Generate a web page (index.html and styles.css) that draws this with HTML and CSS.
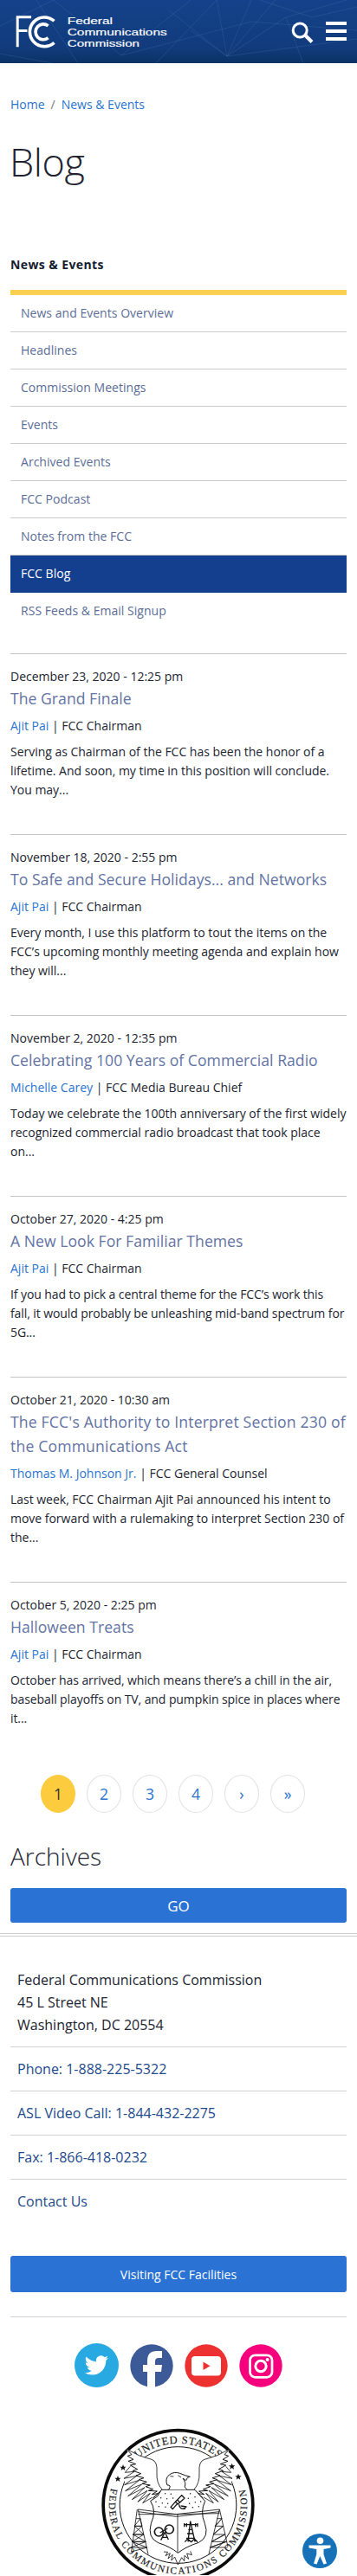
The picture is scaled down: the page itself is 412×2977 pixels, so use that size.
FILE: index.html
```html
<!DOCTYPE html>
<html lang="en">
<head>
<meta charset="utf-8">
<meta name="viewport" content="width=device-width, initial-scale=1">
<title>Blog | Federal Communications Commission</title>
<link rel="stylesheet" href="styles.css">
</head>
<body>
<header class="site-header">
  <svg class="header-pattern" viewBox="0 0 412 73" fill="none" stroke="#3f6ea6" stroke-opacity=".35" stroke-width="1"><path d="M0 30 62 0 M42 0 90 73 M62 0 140 64 220 0 M140 64 290 25 412 35 M180 73 250 0 262 65 M262 65 195 12 M262 65 220 35 M262 65 290 0 M262 65 318 0 M262 65 412 45 M262 65 330 20 400 0 M330 20 350 73 M0 62 60 73 M300 0 360 20 412 8"/></svg>
  <a class="logo" href="#" aria-label="Federal Communications Commission">
    <svg viewBox="50 48 532 124" width="177" height="41">
      <g fill="none" stroke="#fff">
        <path stroke-width="9" d="M58 164V59H106M62 107H92"/>
        <path stroke-width="11" d="M186 73A51 51 0 1 0 186 149"/>
        <path stroke-width="11" d="M165 90A27 27 0 1 0 165 132"/>
      </g>
      <g class="logo-text">
        <text x="232" y="83" textLength="158" lengthAdjust="spacingAndGlyphs">Federal</text>
        <text x="232" y="123" textLength="348" lengthAdjust="spacingAndGlyphs">Communications</text>
        <text x="232" y="164" textLength="252" lengthAdjust="spacingAndGlyphs">Commission</text>
      </g>
    </svg>
  </a>
  <div class="header-tools">
    <svg width="26" height="26" viewBox="0 0 26 26" fill="none" stroke="#fff"><circle cx="10.2" cy="10" r="8" stroke-width="3"/><path d="M16 15.5 24 23.5" stroke-width="4"/></svg>
    <span class="menu-icon"><i></i><i></i><i></i></span>
  </div>
</header>
<main class="content">
  <nav class="breadcrumb"><a href="#">Home</a><span>/</span><a href="#">News &amp; Events</a></nav>
  <h1>Blog</h1>
  <nav class="side-menu">
    <h2>News &amp; Events</h2>
    <ul>
      <li>News and Events Overview</li>
      <li>Headlines</li>
      <li>Commission Meetings</li>
      <li>Events</li>
      <li>Archived Events</li>
      <li>FCC Podcast</li>
      <li>Notes from the FCC</li>
      <li class="active">FCC Blog</li>
      <li>RSS Feeds &amp; Email Signup</li>
    </ul>
  </nav>
  <article class="post">
    <div class="date">December 23, 2020 - 12:25 pm</div>
    <h3>The Grand Finale</h3>
    <div class="author"><a href="#">Ajit Pai</a> | FCC Chairman</div>
    <p>Serving as Chairman of the FCC has been the honor of a<br>lifetime. And soon, my time in this position will conclude.<br>You may...</p>
  </article>
  <article class="post">
    <div class="date">November 18, 2020 - 2:55 pm</div>
    <h3>To Safe and Secure Holidays... and Networks</h3>
    <div class="author"><a href="#">Ajit Pai</a> | FCC Chairman</div>
    <p>Every month, I use this platform to tout the items on the<br>FCC’s upcoming monthly meeting agenda and explain how<br>they will...</p>
  </article>
  <article class="post">
    <div class="date">November 2, 2020 - 12:35 pm</div>
    <h3>Celebrating 100 Years of Commercial Radio</h3>
    <div class="author"><a href="#">Michelle Carey</a> | FCC Media Bureau Chief</div>
    <p>Today we celebrate the 100th anniversary of the first widely<br>recognized commercial radio broadcast that took place<br>on...</p>
  </article>
  <article class="post">
    <div class="date">October 27, 2020 - 4:25 pm</div>
    <h3>A New Look For Familiar Themes</h3>
    <div class="author"><a href="#">Ajit Pai</a> | FCC Chairman</div>
    <p class="tight">If you had to pick a central theme for the FCC’s work this<br>fall, it would probably be unleashing mid-band spectrum for<br>5G...</p>
  </article>
  <article class="post">
    <div class="date">October 21, 2020 - 10:30 am</div>
    <h3 class="loose">The FCC's Authority to Interpret Section 230 of<br>the Communications Act</h3>
    <div class="author"><a href="#">Thomas M. Johnson Jr.</a> | FCC General Counsel</div>
    <p>Last week, FCC Chairman Ajit Pai announced his intent to<br>move forward with a rulemaking to interpret Section 230 of<br>the...</p>
  </article>
  <article class="post">
    <div class="date">October 5, 2020 - 2:25 pm</div>
    <h3>Halloween Treats</h3>
    <div class="author"><a href="#">Ajit Pai</a> | FCC Chairman</div>
    <p class="tight">October has arrived, which means there’s a chill in the air,<br>baseball playoffs on TV, and pumpkin spice in places where<br>it...</p>
  </article>
  <nav class="pager"><span class="current">1</span><a>2</a><a>3</a><a>4</a><a>›</a><a>»</a></nav>
  <h2 class="archives">Archives</h2>
  <button class="btn go">GO</button>
</main>
<footer class="site-footer">
  <ul class="contact">
    <li class="address">Federal Communications Commission<br>45 L Street NE<br>Washington, DC 20554</li>
    <li><a href="#">Phone: 1-888-225-5322</a></li>
    <li><a href="#">ASL Video Call: 1-844-432-2275</a></li>
    <li><a href="#">Fax: 1-866-418-0232</a></li>
    <li><a href="#">Contact Us</a></li>
  </ul>
  <button class="btn visit">Visiting FCC Facilities</button>
  <div class="social">
    <svg viewBox="0 0 51 51" width="51" height="51"><circle cx="25.5" cy="25.5" r="25.5" fill="#29a9e1"/><path fill="#fff" transform="translate(11.7 11.8) scale(1.14)" d="M23.95 4.57a10 10 0 0 1-2.82.77 4.96 4.96 0 0 0 2.16-2.72c-.95.55-2 .96-3.13 1.18a4.92 4.92 0 0 0-8.38 4.48C7.69 8.1 4.07 6.13 1.64 3.16a4.92 4.92 0 0 0 1.52 6.57 4.9 4.9 0 0 1-2.23-.61v.06c0 2.39 1.7 4.37 3.95 4.83a5 5 0 0 1-2.22.08 4.93 4.93 0 0 0 4.6 3.42A9.87 9.87 0 0 1 0 19.54a13.94 13.94 0 0 0 7.55 2.21c9.05 0 14-7.5 14-13.98 0-.21 0-.42-.02-.63a9.94 9.94 0 0 0 2.42-2.57z"/></svg>
    <svg viewBox="0 0 50 50" width="50" height="50"><circle cx="25" cy="25" r="24.7" fill="#3d5a98"/><path fill="#fff" d="M20 50V32H15V24H20V19Q20 8 31 8H37V16H33Q29 16 29 20V24H37L36 32H29V50Z"/></svg>
    <svg viewBox="0 0 50 50" width="50" height="50"><circle cx="25" cy="25" r="24.7" fill="#ed3131"/><rect x="8" y="14" width="34" height="22.5" rx="4" fill="#fff"/><path fill="#ed3131" d="M21.5 20.5 29.5 25.2 21.5 30Z"/></svg>
    <svg viewBox="0 0 50 50" width="50" height="50"><circle cx="25" cy="25" r="24.7" fill="#f7007d"/><g fill="none" stroke="#fff" stroke-width="2.7"><rect x="12.5" y="12.8" width="25.5" height="25.5" rx="6"/><circle cx="25" cy="25.5" r="6.2" stroke-width="3"/></g><circle cx="32.6" cy="18" r="2" fill="#fff"/></svg>
  </div>
  <div class="seal">
    <svg viewBox="81 51 531 510" width="177" height="170">
      <defs>
        <path id="arc-top" d="M132.500 318A214 214 0 0 1 560.500 318"/>
        <path id="arc-bottom" d="M118 248A239 239 0 1 0 575 248"/>
        <path id="star" d="M0-11 3-3 11-3 5 2 7 10 0 5-7 10-5 2-11-3-3-3Z"/>
      </defs>
      <circle cx="346.500" cy="318" r="259" fill="#fff" stroke="#0b0b0b" stroke-width="11"/>
      <circle cx="346.500" cy="318" r="202" fill="none" stroke="#111" stroke-width="3"/>
      <g class="seal-text">
        <text class="seal-top" textLength="306"><textPath href="#arc-top" startOffset="183">UNITED STATES</textPath></text>
        <text textLength="865"><textPath href="#arc-bottom" startOffset="12">FEDERAL COMMUNICATIONS COMMISSION</textPath></text>
      </g>
      <g fill="#111"><use href="#star" x="156" y="188"/><use href="#star" x="138" y="227"/><use href="#star" x="533" y="184"/><use href="#star" x="555" y="220"/></g>
      <g fill="none" stroke="#151515" stroke-width="2.500" stroke-linejoin="round">
        <g id="wing">
          <path fill="#fff" stroke="none" d="M168 124Q235 160 264 164 282 210 291 264L260 302 165 290 160 210 190 180Z"/>
          <path d="M168 124Q210 150 255 160 276 166 273 205 271 242 291 264"/>
          <path stroke-width="3" d="M168 124 186 143 172 148 192 160 174 166 200 176 181 180 206 194 190 199 218 209 201 216 228 224 211 230 238 238 222 244 250 249 234 254 260 263 244 268 274 270 256 281 278 278 260 294 291 264"/>
          <path d="M181 184 163 205 195 202 159 226 203 217 161 248 212 232 164 269 221 246 173 287 231 257 187 299 240 268 207 307 250 277 224 311 258 291"/>
        </g>
        <use href="#wing" transform="translate(693 0) scale(-1 1)"/>
        <path fill="#fff" stroke-width="3" d="M289 265H405L424 287 440 304Q422 342 439 382 456 428 418 448 374 462 346 484 319 462 278 449 239 431 253 382 273 338 251 304L275 288Z"/>
        <path d="M345 350V482"/>
        <path fill="#fff" stroke-width="3" d="M314 265Q325 247 309 249 300 226 316 213 333 201 353 208 370 216 388 220 378 218 374 233L363 225Q376 244 369 255L378 265"/>
        <path d="M319 218 331 219M346 215 357 222"/>
        <path d="M208 333 340 350 490 333M208 341 340 358 490 341M208 350 340 350 490 347M205 333 185 480M208 333 243 488M490 333 453 488M490 333 519 462"/>
        <path d="M201 365 216 365 195 391 222 391 190 420 228 420 187 445 235 445 183 465 239 465 185 480M216 365 222 391 195 391 228 420 190 420 235 445 187 445 239 465M481 365 498 365 475 391 503 391 468 420 509 420 462 445 514 445 457 465 518 465M498 365 475 391M503 391 468 420M509 420 462 445M514 445 457 465"/>
        <path d="M297 480 311 481 303 494 319 485 312 504 328 490 323 510 335 498 346 525 359 500 368 512 369 493 383 505 377 486 394 491 389 478"/>
        <circle cx="280" cy="411" r="15" stroke-width="5"/><circle cx="316" cy="402" r="15" stroke-width="5"/>
        <path stroke-width="4" d="M284 414 310 399M301 412 287 440M301 412 313 438M291 430 308 430M389 374 381 445M389 374 405 445M368 386 413 386M368 381V394M376 381V394M407 381V394M414 381V394M382 403 397 403M378 417 400 417M375 433 405 433M370 446 380 435 392 446 403 435 414 446"/>
        <path stroke-width="4" d="M321 325 337 307 344 313 328 332ZM344 300 359 284 369 294 353 309ZM337 307 344 300 353 309 344 316M350 316Q350 334 372 330M356 321 375 324 365 332"/>
      </g>
      <g fill="#111"><circle cx="302" cy="278" r="2.200"/><circle cx="322" cy="280" r="2.200"/><circle cx="389" cy="278" r="2.200"/><circle cx="287" cy="293" r="2.200"/><circle cx="308" cy="296" r="2.200"/><circle cx="329" cy="294" r="2.200"/><circle cx="382" cy="295" r="2.200"/><circle cx="405" cy="290" r="2.200"/><circle cx="270" cy="307" r="2.200"/><circle cx="292" cy="311" r="2.200"/><circle cx="311" cy="313" r="2.200"/><circle cx="386" cy="313" r="2.200"/><circle cx="406" cy="308" r="2.200"/><circle cx="425" cy="306" r="2.200"/><circle cx="280" cy="323" r="2.200"/><circle cx="303" cy="325" r="2.200"/><circle cx="397" cy="326" r="2.200"/><circle cx="418" cy="323" r="2.200"/></g>
    </svg>
  </div>
</footer>
<a class="access" href="#" aria-label="Accessibility">
  <svg width="40" height="40" viewBox="0 0 40 40"><circle cx="20" cy="20" r="20" fill="#1771b8"/><circle cx="20.500" cy="8.200" r="3.800" fill="#fff"/><path fill="#fff" d="M7.500 13.500 32.500 13.500V16.500L24.500 18V24L28 34.500 24.500 35.500 20.300 26 16.500 35.500 13 34.500 16.300 24V18L7.500 16.500Z"/></svg>
</a>
</body>
</html>
```
FILE: styles.css
```css
* { box-sizing: border-box; }
html, body { height: 2977px; overflow: hidden; }
body { margin: 0; background: #fff; color: #212430; font: 14px/22.4px "Open Sans", sans-serif; position: relative; }
a { color: #2a73cf; text-decoration: none; }
ul { list-style: none; margin: 0; padding: 0; }
h1, h2, h3, p { margin: 0; }

.site-header { position: relative; height: 73px; padding: 16px 12px 0 17px; display: flex; justify-content: space-between; background: linear-gradient(#14428a, #113b7c 75%, #0b3265); }
.header-pattern { position: absolute; inset: 0; width: 412px; height: 73px; }
.logo { position: relative; height: 41px; }
.logo svg { display: block; }
.logo-text { fill: #fff; stroke: #fff; stroke-width: .5px; font: 34px "Liberation Sans", sans-serif; }
.header-tools { position: relative; display: flex; gap: 14px; padding-top: 9px; }
.menu-icon { width: 24px; height: 22px; display: flex; flex-direction: column; justify-content: space-between; }
.menu-icon i { height: 4px; background: #fff; }

.content { padding: 0 12px; height: 2161px; }
.breadcrumb { padding-top: 37px; display: flex; gap: 7px; }
.breadcrumb span { color: #777; }
h1 { font-size: 45px; font-weight: 300; line-height: 64px; margin-top: 23px; margin-bottom: 1px; letter-spacing: -.4px; margin-left: -1px; }

.side-menu { padding-top: 75px; }
.side-menu h2 { font-size: 14px; line-height: 22px; color: #14202f; letter-spacing: .4px; }
.side-menu ul { margin-top: 18px; border-top: 6px solid #fbcf50; }
.side-menu li { height: 43px; padding: 10px 12px; border-bottom: 1px solid #ccc; color: #5b6d97; letter-spacing: .03px; }
.side-menu li.active { background: #143f8f; color: #fff; border-color: #143f8f; }
.side-menu li:last-child { border: 0; }

.post { height: 209px; border-top: 1px solid #c4c4c4; padding-top: 15px; }
.side-menu + .post { margin-top: 27px; }
.post h3 { font-size: 17.6px; font-weight: 400; line-height: 28px; color: #6373a3; margin-top: -1px; white-space: nowrap; letter-spacing: .03px; }
.post h3.loose { letter-spacing: .17px; }
.author { margin-top: 7px; }
.post p { margin-top: 7.4px; white-space: nowrap; letter-spacing: -.02px; }
.post p.tight { letter-spacing: -.09px; }
.post:has(h3 br) { height: 237px; }

.pager { display: flex; gap: 13px; padding-left: 35px; margin-top: 14px; }
.pager a, .pager span { width: 40px; height: 44px; border: 1px solid #e2e2e6; border-radius: 50%; font-size: 17.6px; line-height: 43px; text-align: center; }
.pager .current { background: #fdcb3e; border-color: #fdcb3e; color: #333; }
.archives { font-size: 28px; line-height: 36px; font-weight: 300; margin-top: 32px; }
.btn { display: block; width: 100%; border: 0; border-radius: 3px; background: #2a72d4; color: #fff; font-family: inherit; text-align: center; padding: 0; }
.go { height: 40px; margin-top: 19px; font-size: 17px; }

.site-footer { border-top: 1px solid #ccc; padding: 2px 12px 0; position: relative; }
.site-footer::before { content: ""; display: block; margin: 0 -12px; border-top: 1px solid #ccc; }
.contact { padding-top: 37px; }
.contact li { height: 51px; padding: 12px 8px; font-size: 16px; line-height: 26px; border-bottom: 1px solid #d2d2d6; }
.contact .address { height: 91px; padding-top: 0; }
.contact li:last-child { border: 0; }
.contact a { color: #1d4a8c; }
.visit { height: 42px; margin-top: 37px; font-size: 14px; line-height: 44px; }
.social { margin-top: 28px; border-top: 1px solid #d2d2d6; padding-top: 30px; display: flex; justify-content: center; align-items: center; gap: 13px; }
.seal { height: 170px; margin-top: 47px; padding-left: 105px; overflow: hidden; }
.seal svg { display: block; }
.seal-text { fill: #222; font: 34px "Liberation Serif", serif; stroke: #222; stroke-width: .5px; }
.seal-top { font-size: 38px; }
.access { position: absolute; left: 349px; top: 2928px; width: 40px; height: 40px; }
```
